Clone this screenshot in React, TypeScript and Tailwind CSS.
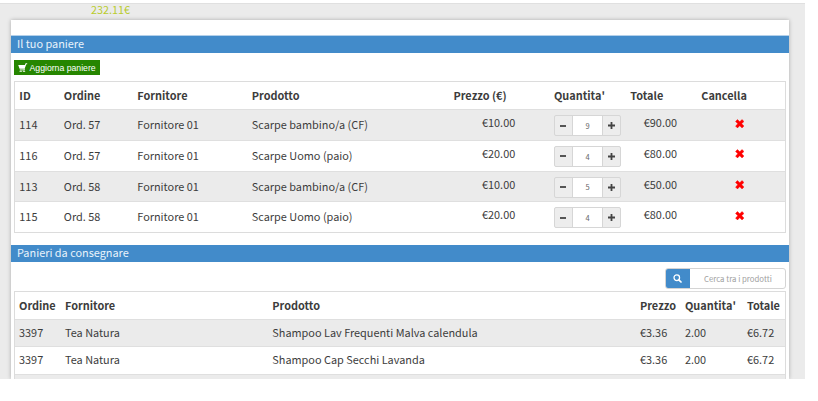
import React from 'react';

const basket = [
  { id: '114', order: 'Ord. 57', product: 'Scarpe bambino/a (CF)', price: '€10.00', qty: 9, total: '€90.00' },
  { id: '116', order: 'Ord. 57', product: 'Scarpe Uomo (paio)', price: '€20.00', qty: 4, total: '€80.00' },
  { id: '113', order: 'Ord. 58', product: 'Scarpe bambino/a (CF)', price: '€10.00', qty: 5, total: '€50.00' },
  { id: '115', order: 'Ord. 58', product: 'Scarpe Uomo (paio)', price: '€20.00', qty: 4, total: '€80.00' },
];
const deliveries = ['Shampoo Lav Frequenti Malva calendula', 'Shampoo Cap Secchi Lavanda'];

const basketCols = 'grid grid-cols-[44.5px_73.5px_114.5px_201.7px_100.5px_76.3px_71px_1fr] pl-[4.3px]';
const deliveryCols = 'grid grid-cols-[46px_207.3px_367.7px_45px_62px_1fr] pl-[4px]';

function CartIcon() {
  return (
    <svg viewBox="0 0 10 10" className="h-[10px] w-[10px] shrink-0" fill="none">
      <path d="M0.2 2H6.9L7.6 0.3H9.2V1.2H8.3L6.6 5.8H1.6Z" fill="white" />
      <path d="M1.8 6.9H6.7" stroke="white" strokeWidth="0.9" />
      <path d="M6.3 5.5L6.1 7" stroke="white" strokeWidth="0.8" />
      <path d="M2 8.2H3.4M5.3 8.2H6.7" stroke="white" strokeWidth="1.1" strokeLinecap="round" />
    </svg>
  );
}

function RemoveIcon() {
  return (
    <svg viewBox="0 0 10 10" className="h-[9.5px] w-[9.5px]">
      <path d="M2.6 0.6L5 3L7.4 0.6L9.4 2.6L7 5L9.4 7.4L7.4 9.4L5 7L2.6 9.4L0.6 7.4L3 5L0.6 2.6Z" fill="#f00" stroke="#f00" strokeWidth="0.5" strokeLinejoin="round" />
    </svg>
  );
}

function SearchIcon() {
  return (
    <svg viewBox="0 0 10 10" className="h-[9px] w-[9px]" fill="none" stroke="white" strokeLinecap="round">
      <circle cx="4.2" cy="4.2" r="3.1" strokeWidth="1.4" />
      <path d="M6.7 6.7L8.9 8.9" strokeWidth="1.9" />
    </svg>
  );
}

function Stepper({ value }: { value: number }) {
  return (
    <div className="flex h-[21px] w-[67px] overflow-hidden rounded-[2px] border border-[#d6d6d6] bg-[#ededed]">
      <div className="flex w-[18px] items-center justify-center border-r border-[#d6d6d6]">
        <span className="h-[2px] w-[6px] bg-[#555]" />
      </div>
      <div className="flex flex-1 items-center justify-center bg-white text-[7.5px] text-[#666]">{value}</div>
      <div className="flex w-[18px] items-center justify-center border-l border-[#d6d6d6]">
        <svg viewBox="0 0 7 7" className="h-[7px] w-[7px]">
          <path d="M3.5 0V7M0 3.5H7" stroke="#444" strokeWidth="1.8" />
        </svg>
      </div>
    </div>
  );
}

function Heading({ children }: { children: React.ReactNode }) {
  return (
    <div className="h-[17px] bg-[#428bca] pl-[6px] text-[10.9px] leading-[15px] text-[#e9f3fb]">{children}</div>
  );
}

export default function App() {
  return (
    <div className="h-[401px] w-[818px] bg-white pt-[3px] font-['Noto_Sans_CJK_SC','Noto_Sans',sans-serif] text-[10.9px] text-[#3c3c3c]">
      <div className="h-[376px] w-[805px] border-t border-[#e0e0e0] bg-[#ebebeb]">
        <div className="h-[16px] pl-[91px] text-[10.8px] leading-[10px] text-[#b9cc2e]">232.11€</div>
        <div className="ml-[11px] h-[359px] w-[778px] overflow-hidden bg-white pt-[15px] shadow-[0_0_4px_rgba(0,0,0,0.28)]">
          <div className="border-t border-[#b3d0ea]">
            <Heading>Il tuo paniere</Heading>
          </div>
          <div className="px-[3px] pt-[7px]">
            <button className="flex h-[15px] w-[86px] items-center bg-[#268600] pl-[4px] font-['Liberation_Sans',Arial,sans-serif] text-[8.7px] leading-[15px] text-white">
              <CartIcon />
              <span className="ml-[1.5px] pt-[1.5px] whitespace-nowrap">Aggiorna paniere</span>
            </button>
            <div className="mt-[6px] h-[152px] w-[772px] border border-[#dcdcdc]">
              <div className={`${basketCols} h-[27px] leading-[26px] font-bold`}>
                <div>ID</div>
                <div>Ordine</div>
                <div>Fornitore</div>
                <div>Prodotto</div>
                <div>Prezzo (€)</div>
                <div>Quantita'</div>
                <div>Totale</div>
                <div>Cancella</div>
              </div>
              {basket.map((row) => (
                <div key={row.id} className={`${basketCols} h-[30.75px] border-t border-[#dfdfdf] leading-[29px] odd:bg-white even:bg-[#ebebeb]`}>
                  <div>{row.id}</div>
                  <div>{row.order}</div>
                  <div>Fornitore 01</div>
                  <div>{row.product}</div>
                  <div className="pl-[28.5px] leading-[25px]">{row.price}</div>
                  <div className="pt-[5px] leading-none"><Stepper value={row.qty} /></div>
                  <div className="pl-[13.5px] leading-[25px]">{row.total}</div>
                  <div className="pt-[8.5px] pl-[33.5px]"><RemoveIcon /></div>
                </div>
              ))}
            </div>
          </div>
          <div className="pt-[12px]">
            <Heading>Panieri da consegnare</Heading>
          </div>
          <div className="px-[3px] pt-[6px]">
            <div className="ml-auto flex h-[21px] w-[121px] overflow-hidden rounded-[3px] border border-[#d4d4d4]">
              <div className="-my-px -ml-px flex w-[25px] items-center justify-center bg-[#428bca]"><SearchIcon /></div>
              <div className="flex-1 pl-[14px] text-[7.8px] leading-[19px] whitespace-nowrap text-[#a0a0a0]">Cerca tra i prodotti</div>
            </div>
            <div className="mt-[2px] w-[772px] border border-[#dcdcdc]">
              <div className={`${deliveryCols} h-[27px] leading-[26px] font-bold`}>
                <div>Ordine</div>
                <div>Fornitore</div>
                <div>Prodotto</div>
                <div>Prezzo</div>
                <div>Quantita'</div>
                <div>Totale</div>
              </div>
              {deliveries.map((product) => (
                <div key={product} className={`${deliveryCols} h-[27.25px] border-t border-[#dfdfdf] leading-[25px] even:bg-[#ebebeb]`}>
                  <div>3397</div>
                  <div>Tea Natura</div>
                  <div>{product}</div>
                  <div>€3.36</div>
                  <div>2.00</div>
                  <div>€6.72</div>
                </div>
              ))}
              <div className="h-[27px] border-t border-[#dfdfdf] bg-[#ebebeb]" />
            </div>
          </div>
        </div>
      </div>
      <div className="h-[22px] bg-white" />
    </div>
  );
}
